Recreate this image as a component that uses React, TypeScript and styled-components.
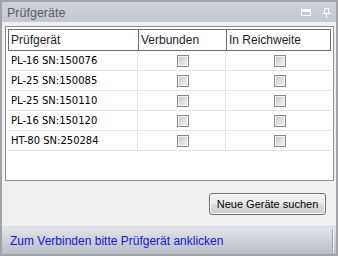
import React from "react";
import styled, { createGlobalStyle } from "styled-components";

const GlobalStyle = createGlobalStyle`
  html, body {
    margin: 0;
    padding: 0;
    background: #f0f0f0;
  }
  * {
    box-sizing: border-box;
  }
`;

const Frame = styled.div`
  width: 338px;
  height: 256px;
  border: 2px solid #a3a3a6;
  background: #f0f0f0;
  display: flex;
  flex-direction: column;
  font-family: "Liberation Sans", Arial, sans-serif;
  font-size: 12px;
  color: #000;
`;

const TitleBar = styled.div`
  height: 20px;
  flex: none;
  display: flex;
  align-items: center;
  justify-content: space-between;
  padding: 1px 5px 0 5px;
  background: linear-gradient(#cdd0d8, #c4c8d1);
  color: #5c5c5c;
  font-size: 12.5px;
`;

const TitleIcons = styled.div`
  display: flex;
  align-items: center;
  gap: 11px;
`;

const Body = styled.div`
  flex: 1;
  display: flex;
  flex-direction: column;
  padding: 4px 2px 0 3px;
`;

const Grid = styled.div`
  height: 155px;
  border: 1px solid #8d9096;
  background: #fff;
  padding: 2px;
`;

const HeaderRow = styled.div`
  display: grid;
  grid-template-columns: 130px 88px 1fr;
  height: 22px;
  border: 1px solid #6e6e6e;
`;

const HeaderCell = styled.div<{ $last?: boolean }>`
  display: flex;
  align-items: center;
  padding-left: 2px;
  border-right: ${(p) => (p.$last ? "none" : "1px solid #6e6e6e")};
  color: #1e1e1e;
`;

const Row = styled.div`
  display: grid;
  grid-template-columns: 130px 88px 1fr;
  height: 20px;
  border-bottom: 1px solid #e4e4e4;
`;

const Cell = styled.div<{ $center?: boolean; $last?: boolean }>`
  display: flex;
  align-items: center;
  justify-content: ${(p) => (p.$center ? "center" : "flex-start")};
  padding-left: ${(p) => (p.$center ? "0" : "3px")};
  border-right: ${(p) => (p.$last ? "none" : "1px solid #e4e4e4")};
  font-family: "DejaVu Sans", Verdana, sans-serif;
  font-size: 10px;
`;

const CheckBox = styled.span`
  display: block;
  width: 12px;
  height: 12px;
  margin-left: 2px;
  border: 1px solid #878888;
  box-shadow: inset 0 0 0 1px #f2f2f2;
  background: linear-gradient(135deg, #c6c7ca, #f5f5f5);
`;

const ButtonRow = styled.div`
  display: flex;
  justify-content: flex-end;
  padding: 12px 8px 0 0;
`;

const Button = styled.button`
  width: 117px;
  height: 22px;
  border: 1px solid #707070;
  border-radius: 3px;
  background: linear-gradient(#f2f2f2 0%, #ebebeb 50%, #dddddd 51%, #cfcfcf 100%);
  box-shadow: inset 0 0 0 1px #fcfcfc;
  font-family: "Liberation Sans", Arial, sans-serif;
  font-size: 11px;
  color: #000;
  padding: 0;
`;

const StatusBar = styled.div`
  height: 28px;
  flex: none;
  display: flex;
  align-items: center;
  justify-content: space-between;
  border-top: 1px solid #d7d9de;
  background: linear-gradient(#e3e5ea, #b9bdc6);
  padding-left: 8px;
  color: #1515d6;
  font-size: 12px;
`;

const Grip = styled.span`
  align-self: stretch;
  margin: 2px 2px 1px 0;
  width: 2px;
  border-left: 1px solid #9fa3ab;
  border-right: 1px solid #eef0f3;
`;

const devices = [
  "PL-16 SN:150076",
  "PL-25 SN:150085",
  "PL-25 SN:150110",
  "PL-16 SN:150120",
  "HT-80 SN:250284",
];

const App: React.FC = () => {
  return (
    <>
      <GlobalStyle />
      <Frame>
        <TitleBar>
          <span>Prüfgeräte</span>
          <TitleIcons>
            <svg width="10" height="7" viewBox="0 0 10 7">
              <rect x="0" y="0" width="10" height="7" fill="#fff" />
              <rect x="1" y="3" width="8" height="3" fill="#c4c8d1" />
            </svg>
            <svg width="9" height="10" viewBox="0 0 9 10">
              <rect x="2.5" y="0.5" width="4" height="5" fill="none" stroke="#fff" />
              <rect x="0" y="5" width="9" height="1" fill="#fff" />
              <rect x="4" y="6" width="1" height="4" fill="#fff" />
            </svg>
          </TitleIcons>
        </TitleBar>
        <Body>
          <Grid>
            <HeaderRow>
              <HeaderCell>Prüfgerät</HeaderCell>
              <HeaderCell>Verbunden</HeaderCell>
              <HeaderCell $last>In Reichweite</HeaderCell>
            </HeaderRow>
            {devices.map((d) => (
              <Row key={d}>
                <Cell>{d}</Cell>
                <Cell $center>
                  <CheckBox />
                </Cell>
                <Cell $center $last>
                  <CheckBox />
                </Cell>
              </Row>
            ))}
          </Grid>
          <ButtonRow>
            <Button>Neue Geräte suchen</Button>
          </ButtonRow>
        </Body>
        <StatusBar>
          <span>Zum Verbinden bitte Prüfgerät anklicken</span>
          <Grip />
        </StatusBar>
      </Frame>
    </>
  );
};

export default App;
